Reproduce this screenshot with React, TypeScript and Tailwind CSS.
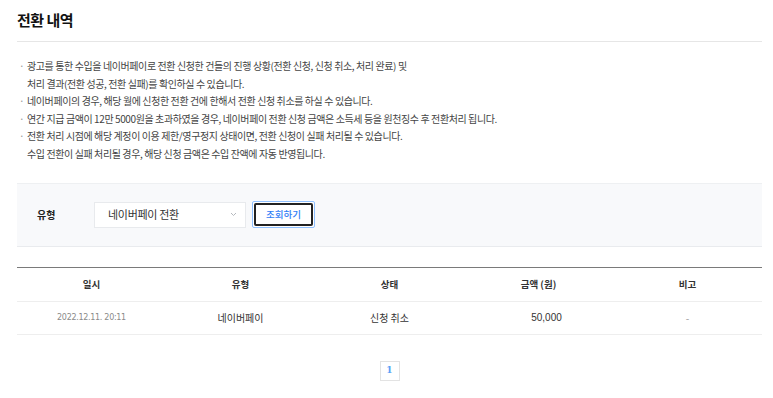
import React from "react";

const notes: Array<{ bullet: boolean; text: string }> = [
  { bullet: true, text: "광고를 통한 수입을 네이버페이로 전환 신청한 건들의 진행 상황(전환 신청, 신청 취소, 처리 완료) 및" },
  { bullet: false, text: "처리 결과(전환 성공, 전환 실패)를 확인하실 수 있습니다." },
  { bullet: true, text: "네이버페이의 경우, 해당 월에 신청한 전환 건에 한해서 전환 신청 취소를 하실 수 있습니다." },
  { bullet: true, text: "연간 지급 금액이 12만 5000원을 초과하였을 경우, 네이버페이 전환 신청 금액은 소득세 등을 원천징수 후 전환처리 됩니다." },
  { bullet: true, text: "전환 처리 시점에 해당 계정이 이용 제한/영구정지 상태이면, 전환 신청이 실패 처리될 수 있습니다." },
  { bullet: false, text: "수입 전환이 실패 처리될 경우, 해당 신청 금액은 수입 잔액에 자동 반영됩니다." },
];

const headers = ["일시", "유형", "상태", "금액 (원)", "비고"];

const App = () => {
  return (
    <div className="w-[773px] h-[398px] bg-white px-[17px] pt-[10px] text-[#333] font-['Noto_Sans_CJK_KR','Noto_Sans',sans-serif] overflow-hidden">
      <h2 className="text-[15px] font-bold leading-[20px] tracking-[-0.5px] text-[#111] pb-[11px] border-b border-[#e6e6e6] w-[745px]">
        전환 내역
      </h2>

      {/* notice */}
      <ul className="mt-[15px] text-[10px] leading-[17.6px] tracking-[-0.4px] text-[#444]">
        {notes.map((n, i) => (
          <li key={i} className="flex">
            <span className="w-[10px] pl-[2px] text-[#999]">{n.bullet ? "·" : ""}</span>
            <span>{n.text}</span>
          </li>
        ))}
      </ul>

      {/* filter */}
      <div className="mt-[20px] w-[745px] h-[64px] bg-[#f8f9fb] border-t border-[#eef0f2] border-b border-b-[#e9ebee] flex items-center">
        <span className="w-[77px] pl-[20px] text-[10px] font-bold text-[#222]">유형</span>
        <div className="w-[152px] h-[26px] bg-white border border-[#e8eaed] flex items-center justify-between pl-[13px] pr-[8px]">
          <span className="text-[11px] text-[#333] tracking-[-0.3px]">네이버페이 전환</span>
          <svg width="7" height="5" viewBox="0 0 7 5" fill="none">
            <path d="M1 1l2.5 2.5L6 1" stroke="#b5b9be" strokeWidth="1" />
          </svg>
        </div>
        <button className="ml-[6px] w-[63px] h-[27px] rounded-[2px] border border-[#8fc0ff] p-[1px] bg-white">
          <span className="flex items-center justify-center w-full h-full border-2 border-[#222] rounded-[2px] text-[9.5px] text-[#2f7df6] font-medium">
            조회하기
          </span>
        </button>
      </div>

      {/* table */}
      <table className="mt-[20px] w-[745px] border-t border-[#7a7a7a] table-fixed">
        <thead>
          <tr className="h-[34px] border-b border-[#eeeeee]">
            {headers.map((h) => (
              <th key={h} className="text-[9.5px] font-bold text-[#333] text-center">
                {h}
              </th>
            ))}
          </tr>
        </thead>
        <tbody>
          <tr className="h-[33px] border-b border-[#eeeeee]">
            <td className="text-center text-[8px] text-[#8a8a8a] font-['DejaVu_Sans',sans-serif] tracking-[-0.3px]">
              2022.12.11. 20:11
            </td>
            <td className="text-center text-[10px] text-[#333]">네이버페이</td>
            <td className="text-center text-[10px] text-[#333]">신청 취소</td>
            <td className="text-center pl-[16px] text-[10px] text-[#333] font-['Liberation_Sans',sans-serif]">50,000</td>
            <td className="text-center text-[10px] text-[#999]">-</td>
          </tr>
        </tbody>
      </table>

      {/* pagination */}
      <div className="mt-[26px] w-[745px] flex justify-center">
        <span className="w-[20px] h-[20px] border border-[#e3e3e3] flex items-center justify-center text-[9px] font-bold text-[#5aa0f5] font-['DejaVu_Serif',serif]">
          1
        </span>
      </div>
    </div>
  );
};

export default App;
